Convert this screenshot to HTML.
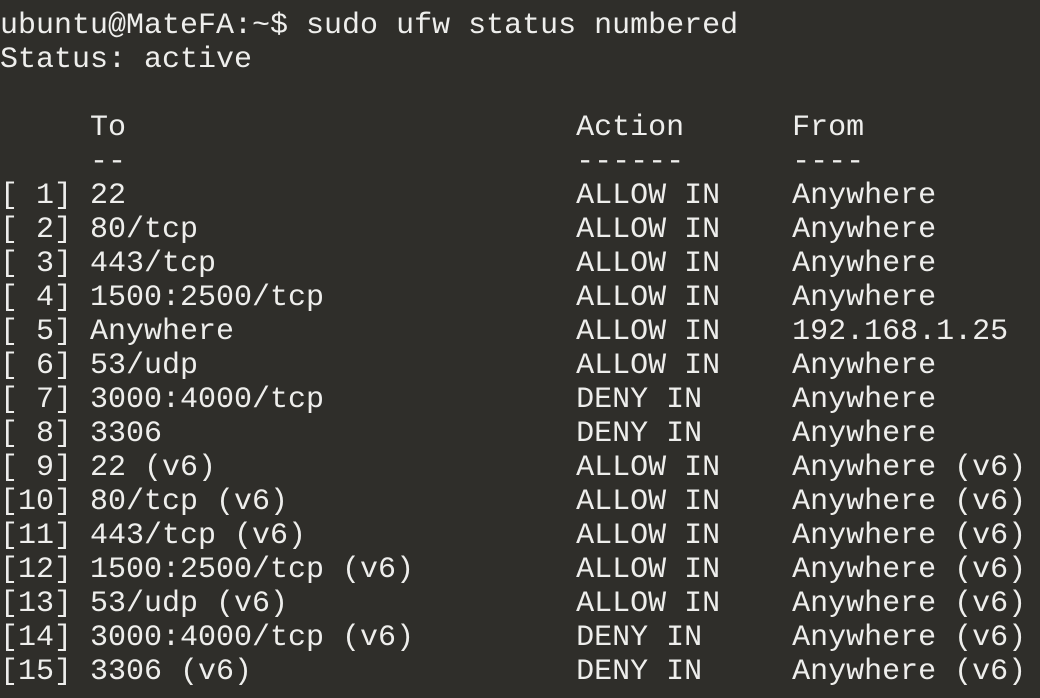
<!DOCTYPE html>
<html><head><meta charset="utf-8"><style>
html,body{margin:0;padding:0;background:#2f2e2a;width:1040px;height:698px;overflow:hidden}
pre{margin:0;padding:9px 0 0 0;font-family:"Liberation Mono","DejaVu Sans Mono",monospace;font-size:30px;line-height:34px;color:#eeeeec;white-space:pre;letter-spacing:0}
</style></head><body><pre>ubuntu@MateFA:~$ sudo ufw status numbered
Status: active

     To                         Action      From
     --                         ------      ----
[ 1] 22                         ALLOW IN    Anywhere
[ 2] 80/tcp                     ALLOW IN    Anywhere
[ 3] 443/tcp                    ALLOW IN    Anywhere
[ 4] 1500:2500/tcp              ALLOW IN    Anywhere
[ 5] Anywhere                   ALLOW IN    192.168.1.25
[ 6] 53/udp                     ALLOW IN    Anywhere
[ 7] 3000:4000/tcp              DENY IN     Anywhere
[ 8] 3306                       DENY IN     Anywhere
[ 9] 22 (v6)                    ALLOW IN    Anywhere (v6)
[10] 80/tcp (v6)                ALLOW IN    Anywhere (v6)
[11] 443/tcp (v6)               ALLOW IN    Anywhere (v6)
[12] 1500:2500/tcp (v6)         ALLOW IN    Anywhere (v6)
[13] 53/udp (v6)                ALLOW IN    Anywhere (v6)
[14] 3000:4000/tcp (v6)         DENY IN     Anywhere (v6)
[15] 3306 (v6)                  DENY IN     Anywhere (v6)</pre></body></html>
